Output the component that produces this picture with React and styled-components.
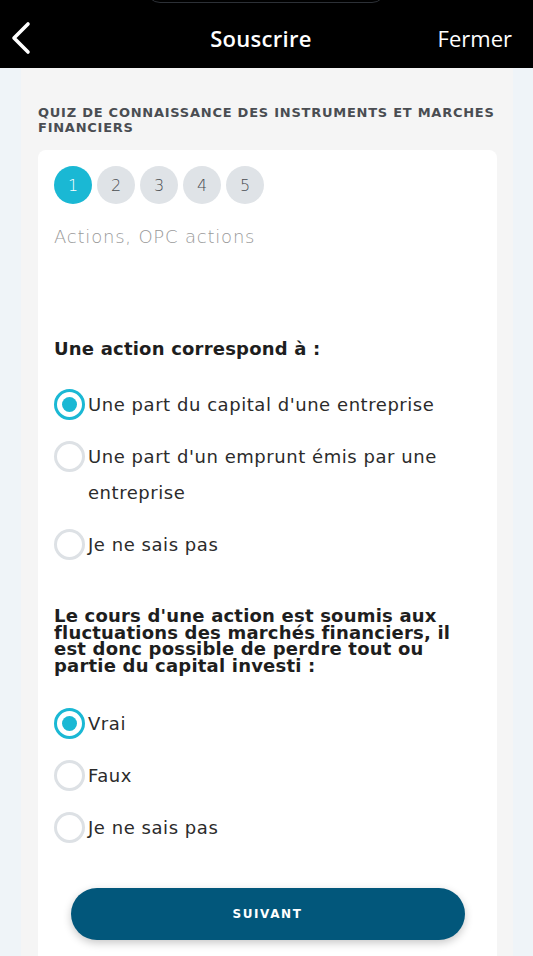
import React, { useState } from 'react'
import styled, { createGlobalStyle } from 'styled-components'

const GlobalStyle = createGlobalStyle`
  html, body {
    margin: 0;
    padding: 0;
    background: #eff4f8;
    font-family: "DejaVu Sans", "Open Sans", sans-serif;
  }
  * {
    box-sizing: border-box;
  }
`

const Screen = styled.div`
  width: 533px;
  height: 956px;
  overflow: hidden;
  background: #eff4f8;
  display: flex;
  flex-direction: column;
`

const Header = styled.header`
  position: relative;
  height: 68px;
  flex-shrink: 0;
  background: #000;
  display: grid;
  grid-template-columns: 1fr auto 1fr;
  align-items: center;
  padding: 8px 21px 0 10px;
  color: #fff;
`

const Island = styled.div`
  position: absolute;
  left: 146px;
  top: -30px;
  width: 240px;
  height: 33px;
  border: 1.5px solid #2c3036;
  border-radius: 0 0 14px 14px;
`

const BackButton = styled.button`
  justify-self: start;
  background: none;
  border: none;
  padding: 0;
  display: flex;
  cursor: pointer;
`

const Title = styled.h1`
  margin: 0;
  font-family: "Open Sans", sans-serif;
  font-weight: 600;
  font-size: 22px;
  letter-spacing: 0.3px;
`

const CloseLink = styled.span`
  justify-self: end;
  font-family: "Open Sans", sans-serif;
  font-size: 22px;
  font-weight: 400;
`

const Column = styled.main`
  flex: 1;
  margin: 0 20px 0 21px;
  background: #f5f5f5;
  padding: 37px 16px 0 17px;
`

const SectionTitle = styled.h2`
  margin: 0 0 15px;
  font-size: 13px;
  line-height: 15px;
  font-weight: 700;
  letter-spacing: 0.75px;
  text-transform: uppercase;
  color: #4a4d52;
`

const Card = styled.section`
  background: #fff;
  border-radius: 8px;
  padding: 16px 16px 40px;
  min-height: 900px;
`

const Steps = styled.div`
  display: flex;
  gap: 5px;
`

const Step = styled.div`
  width: 38px;
  height: 38px;
  border-radius: 50%;
  display: flex;
  align-items: center;
  justify-content: center;
  font-size: 16px;
  font-weight: 300;
  background: ${p => (p.$active ? '#1ab8d4' : '#dfe3e7')};
  color: ${p => (p.$active ? '#fff' : '#4a4d52')};
`

const Subtitle = styled.p`
  margin: 21px 0 0;
  font-size: 18px;
  line-height: 24px;
  font-weight: 300;
  letter-spacing: 0.8px;
  color: #999;
`

const Question = styled.fieldset`
  border: none;
  margin: ${p => p.$top}px 0 0;
  padding: 0;
  display: flex;
  flex-direction: column;
  gap: 16px;
`

const Legend = styled.div`
  margin-bottom: ${p => p.$after}px;
  font-size: 18px;
  line-height: ${p => p.$lh}px;
  font-weight: 700;
  color: #1e1e1e;
  letter-spacing: 0.2px;
`

const Option = styled.label`
  display: flex;
  align-items: flex-start;
  gap: 3px;
  cursor: pointer;
`

const Radio = styled.span`
  flex-shrink: 0;
  width: 31px;
  height: 31px;
  margin-top: 2px;
  border-radius: 50%;
  border: 3px solid ${p => (p.$checked ? '#1ab8d4' : '#dde1e5')};
  display: flex;
  align-items: center;
  justify-content: center;

  &::after {
    content: '';
    width: 15px;
    height: 15px;
    border-radius: 50%;
    background: ${p => (p.$checked ? '#1ab8d4' : 'transparent')};
  }
`

const OptionText = styled.span`
  font-size: 18px;
  line-height: 36px;
  color: #2b2b2b;
  letter-spacing: 0.55px;
  padding-right: 30px;
`

const NextButton = styled.button`
  display: block;
  margin: 42px auto 0;
  width: 394px;
  height: 52px;
  border: none;
  border-radius: 26px;
  background: #02577b;
  color: #fff;
  font-family: "DejaVu Sans", sans-serif;
  font-size: 12px;
  font-weight: 700;
  letter-spacing: 1.6px;
  box-shadow: 0 3px 8px rgba(0, 0, 0, 0.22);
  cursor: pointer;
`

const ChevronLeft = () => (
  <svg width="22" height="34" viewBox="0 0 22 34">
    <polyline
      points="18,3 4,17 18,31"
      fill="none"
      stroke="#fff"
      strokeWidth="3.6"
      strokeLinecap="round"
      strokeLinejoin="round"
    />
  </svg>
)

const questions = [
  {
    legend: ['Une action correspond à :'],
    lh: 24,
    top: 88,
    after: 10,
    options: [
      "Une part du capital d'une entreprise",
      "Une part d'un emprunt émis par une entreprise",
      'Je ne sais pas',
    ],
  },
  {
    legend: [
      "Le cours d'une action est soumis aux",
      'fluctuations des marchés financiers, il',
      'est donc possible de perdre tout ou',
      'partie du capital investi :',
    ],
    lh: 16.7,
    top: 45,
    after: 15,
    options: ['Vrai', 'Faux', 'Je ne sais pas'],
  },
]

const App = () => {
  const [answers, setAnswers] = useState([0, 0])

  return (
    <Screen>
      <GlobalStyle />
      <Header>
        <Island />
        <BackButton aria-label="Retour">
          <ChevronLeft />
        </BackButton>
        <Title>Souscrire</Title>
        <CloseLink>Fermer</CloseLink>
      </Header>
      <Column>
        <SectionTitle>Quiz de connaissance des instruments et marches financiers</SectionTitle>
        <Card>
          <Steps>
            {[1, 2, 3, 4, 5].map(n => (
              <Step key={n} $active={n === 1}>{n}</Step>
            ))}
          </Steps>
          <Subtitle>Actions, OPC actions</Subtitle>
          {questions.map((q, qi) => (
            <Question key={qi} $top={q.top}>
              <Legend $lh={q.lh} $after={q.after}>
                {q.legend.map((line, i) => (
                  <React.Fragment key={i}>
                    {line}
                    {i < q.legend.length - 1 && <br />}
                  </React.Fragment>
                ))}
              </Legend>
              {q.options.map((opt, oi) => (
                <Option
                  key={oi}
                  onClick={() => setAnswers(a => a.map((v, i) => (i === qi ? oi : v)))}
                >
                  <Radio $checked={answers[qi] === oi} />
                  <OptionText>{opt}</OptionText>
                </Option>
              ))}
            </Question>
          ))}
          <NextButton>SUIVANT</NextButton>
        </Card>
      </Column>
    </Screen>
  )
}

export default App
